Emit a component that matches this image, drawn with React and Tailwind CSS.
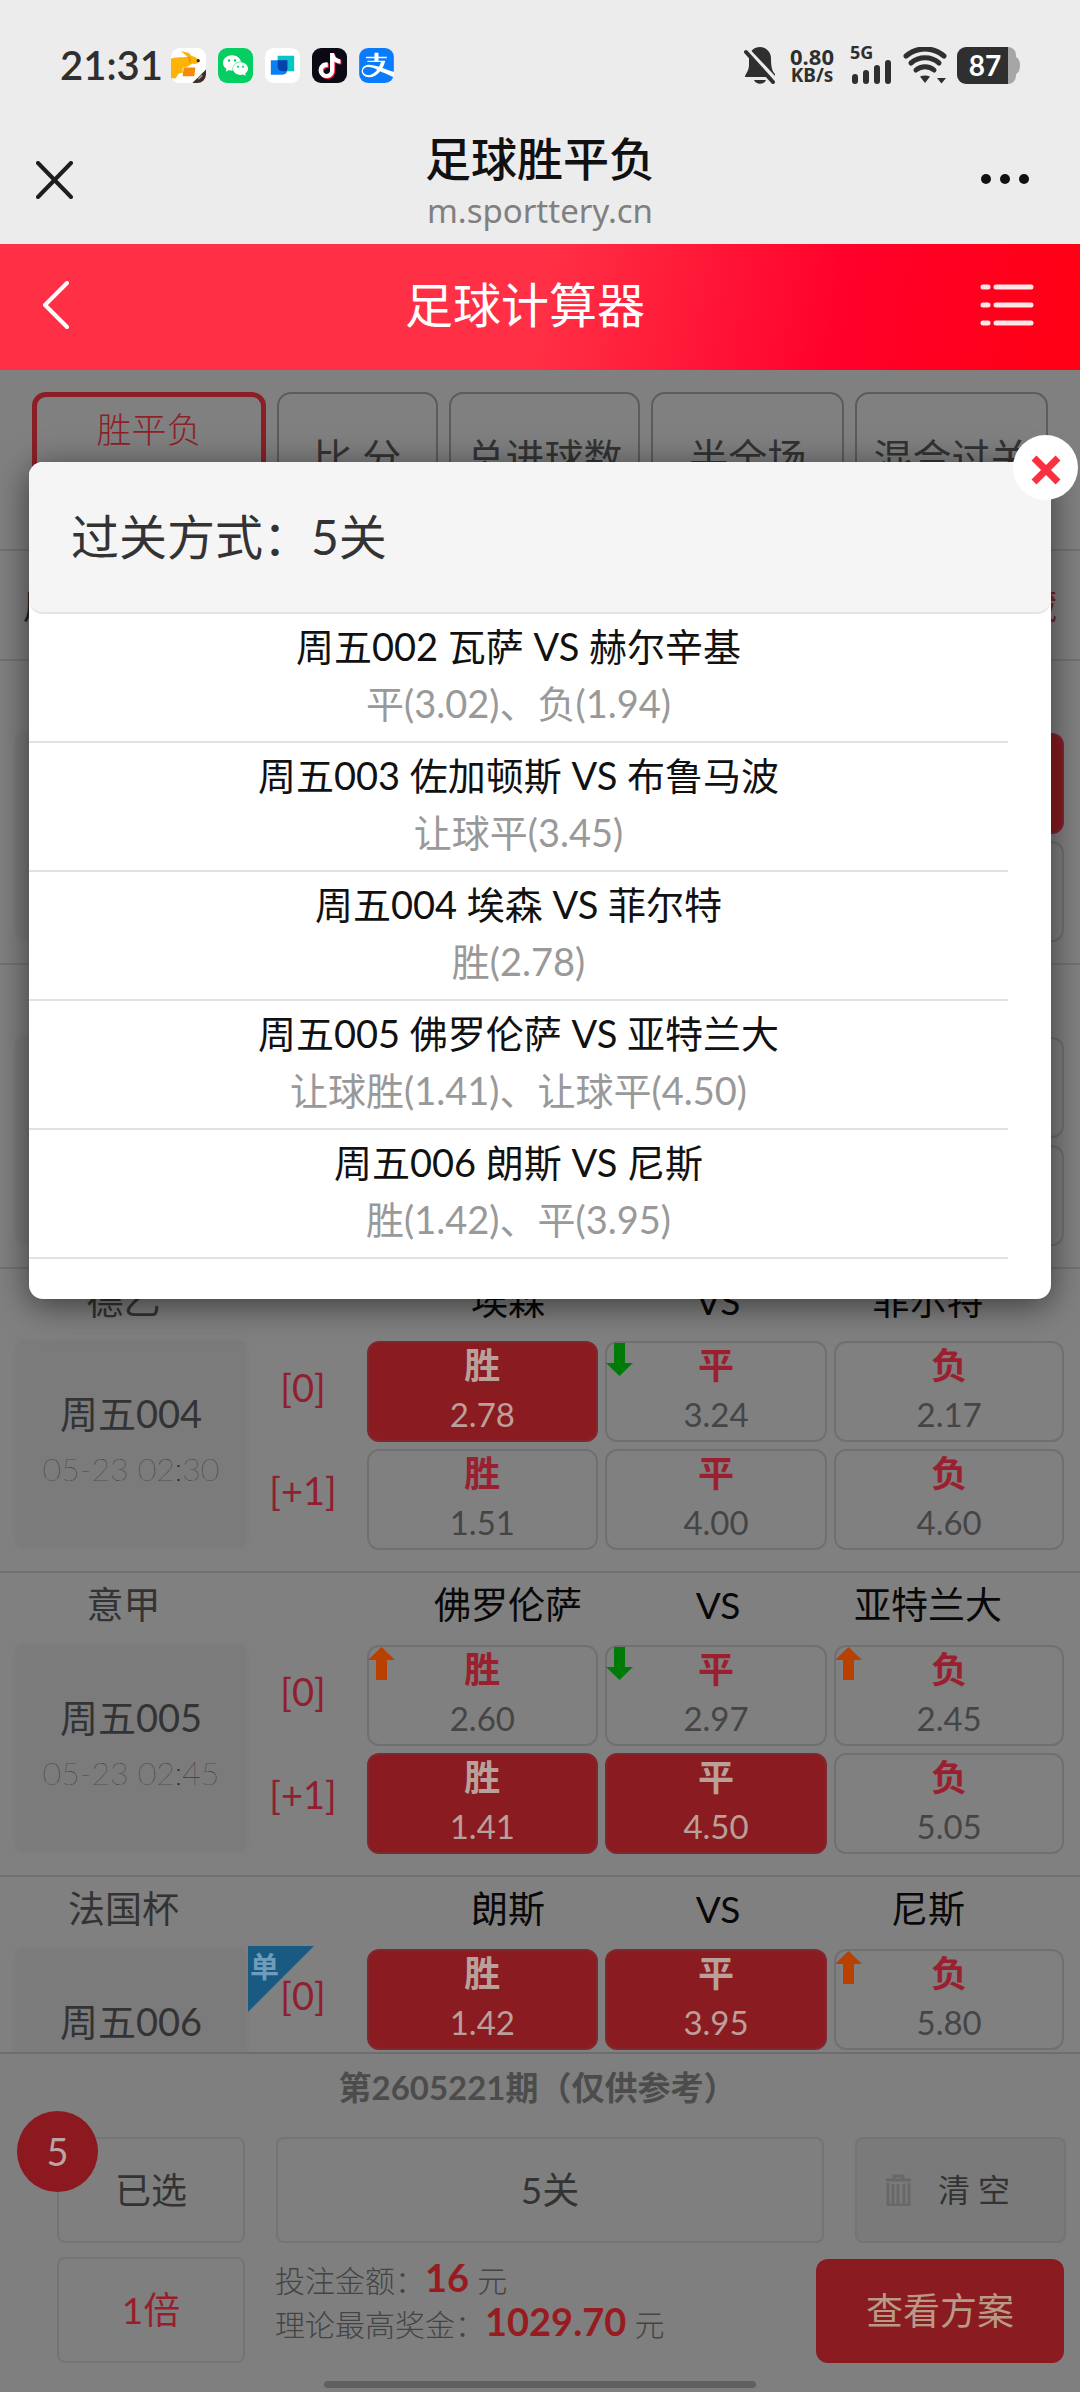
import { useState } from 'react';
import { SiWechat, SiTiktok, SiAlipay } from 'react-icons/si';

const picks = [
  { title: '周五002 瓦萨 VS 赫尔辛基', odds: '平(3.02)、负(1.94)' },
  { title: '周五003 佐加顿斯 VS 布鲁马波', odds: '让球平(3.45)' },
  { title: '周五004 埃森 VS 菲尔特', odds: '胜(2.78)' },
  { title: '周五005 佛罗伦萨 VS 亚特兰大', odds: '让球胜(1.41)、让球平(4.50)' },
  { title: '周五006 朗斯 VS 尼斯', odds: '胜(1.42)、平(3.95)' },
];

const matches = [
  {
    no: '周五002', home: '瓦萨', away: '赫尔辛基',
    rows: [
      { handicap: '[0]', cells: [{}, { odds: '3.02', on: true }, { odds: '1.94', on: true }] },
      { handicap: '', cells: [{}, {}, {}] },
    ],
  },
  {
    no: '周五003', home: '佐加顿斯', away: '布鲁马波',
    rows: [
      { handicap: '[0]', cells: [{}, {}, {}] },
      { handicap: '', cells: [{}, { odds: '3.45', on: true }, {}] },
    ],
  },
  {
    league: '德乙', no: '周五004', time: '05-23 02:30', home: '埃森', away: '菲尔特',
    rows: [
      { handicap: '[0]', cells: [{ odds: '2.78', on: true }, { odds: '3.24', trend: 'down' }, { odds: '2.17' }] },
      { handicap: '[+1]', cells: [{ odds: '1.51' }, { odds: '4.00' }, { odds: '4.60' }] },
    ],
  },
  {
    league: '意甲', no: '周五005', time: '05-23 02:45', home: '佛罗伦萨', away: '亚特兰大',
    rows: [
      { handicap: '[0]', cells: [{ odds: '2.60', trend: 'up' }, { odds: '2.97', trend: 'down' }, { odds: '2.45', trend: 'up' }] },
      { handicap: '[+1]', cells: [{ odds: '1.41', on: true }, { odds: '4.50', on: true }, { odds: '5.05' }] },
    ],
  },
  {
    league: '法国杯', no: '周五006', home: '朗斯', away: '尼斯', single: true,
    rows: [
      { handicap: '[0]', cells: [{ odds: '1.42', on: true }, { odds: '3.95', on: true }, { odds: '5.80', trend: 'up' }] },
    ],
  },
];

const results = ['胜', '平', '负'];

function KangarooIcon() {
  return (
    <svg viewBox="0 0 36 36" className="w-[35px] h-[35px]">
      <rect width="36" height="36" rx="9" fill="#fff" />
      <path d="M0 11C5 9 12 10 17 9L10 3L18 5L21 8C25 9 28 11 29 13C28 16 25 17 22 16C19 18 17 20 12 20L12 26C9 25 7 27 5 31L0 31Z" fill="#fdb308" />
      <path d="M13 20h12l-1 9H12z" fill="#f58a07" />
      <path d="M18 9c2 2 2 4 1 6" fill="none" stroke="#c87b00" strokeWidth="1" />
      <circle cx="28" cy="13" r="1.6" fill="#33230d" />
      <path d="M22 36L36 22V27A9 9 0 0 1 27 36Z" fill="#3b2c25" />
      <path d="M28 32l4-4" stroke="#a58c7b" strokeWidth="2" />
    </svg>
  );
}

function DocsIcon() {
  return (
    <svg viewBox="0 0 36 36" className="w-[35px] h-[35px]">
      <rect width="36" height="36" rx="9" fill="#fff" />
      <path d="M13 8h17v16H18a5 5 0 0 1-5-5z" fill="#06c5c8" />
      <path d="M6 12.500h17v10a5 5 0 0 1-5 5H6z" fill="#0b80f5" />
      <path d="M13 12.500h10v9a3 3 0 0 1-3 2.500h-2a5 5 0 0 1-5-5z" fill="#0344a6" />
    </svg>
  );
}

function BellOffIcon() {
  return (
    <svg viewBox="0 0 32 37" className="w-[32px] h-[37px]" fill="#2f2f2f">
      <path d="M16 0C22 0 27 5 27 11C27 20 28 24 31 27V30H1C1 27 5 24 5 18V10C6 4 10 0 16 0Z" />
      <path d="M10 33H22C20 38 12 38 10 33Z" />
      <path d="M3 2L32 33" stroke="#ececec" strokeWidth="4" />
      <path d="M2 5L29 35" stroke="#2f2f2f" strokeWidth="4" strokeLinecap="round" />
    </svg>
  );
}

function SignalIcon() {
  return (
    <svg viewBox="0 0 40 25" className="w-[40px] h-[25px]" stroke="#2f2f2f" strokeWidth="6" strokeLinecap="round">
      <path d="M3 18V22M14 14V22M25 9V22M36 4V22" />
    </svg>
  );
}

function WifiIcon() {
  return (
    <svg viewBox="0 0 44 37" className="w-[44px] h-[37px]" fill="none" stroke="#2f2f2f" strokeWidth="5" strokeLinecap="round">
      <path d="M3 9C14-.5 30-.5 41 9" />
      <path d="M8 16C16 9 28 9 36 16" />
      <path d="M13 23C18 18.500 26 18.500 31 23" />
      <path d="M17 29.500C20 28 24 28 27 29.500L22 36Z" fill="#2f2f2f" stroke="none" />
      <path d="M34 31H43L38.500 36.500Z" fill="#2f2f2f" stroke="none" />
    </svg>
  );
}

function BatteryIcon() {
  return (
    <div className="relative">
      <svg viewBox="0 0 63 37" className="w-[63px] h-[37px]">
        <path d="M51 0A8 8 0 0 1 59 8V10Q63 12 63 18.500T59 27V29A8 8 0 0 1 51 37Z" fill="#a6a6a6" />
        <path d="M9 0H51V37H9A9 9 0 0 1 0 28V9A9 9 0 0 1 9 0Z" fill="#2f2f2f" />
      </svg>
      <span className="absolute left-0 top-0 w-[56px] text-center text-[28px] leading-[36px] font-bold text-white">87</span>
    </div>
  );
}

function StatusBar() {
  return (
    <div className="flex items-center h-[130px] pl-[60px] pr-[60px] text-[#2f2f2f]">
      <span className="w-[111px] text-[40px] leading-none font-semibold">21:31</span>
      <div className="flex items-center gap-[12px]">
        <KangarooIcon />
        <span className="flex items-center justify-center w-[35px] h-[35px] rounded-[9px] bg-[#05cf63] text-white text-[25px]"><SiWechat /></span>
        <DocsIcon />
        <span className="flex items-center justify-center w-[35px] h-[35px] rounded-[9px] bg-[#0c0914] text-white text-[25px]">
          <SiTiktok className="drop-shadow-[1px_1px_0_#fe2c55]" />
        </span>
        <span className="flex items-center justify-center w-[35px] h-[35px] rounded-[9px] overflow-hidden bg-white text-[#0a7bfa] text-[35px]"><SiAlipay /></span>
      </div>
      <div className="flex items-center ml-auto">
        <BellOffIcon />
        <div className="flex flex-col items-center ml-[11px] w-[50px] font-['Noto_Sans',sans-serif] font-bold">
          <span className="text-[22px] leading-[20px]">0.80</span>
          <span className="text-[19px] leading-[19px]">KB/s</span>
        </div>
        <div className="flex flex-col ml-[13px] w-[42px] h-[38px] justify-between">
          <span className="text-[18px] leading-[12px] font-bold font-['Noto_Sans',sans-serif]">5G</span>
          <div className="-mt-2 ml-[2px]"><SignalIcon /></div>
        </div>
        <div className="ml-[11px] mr-[10px]"><WifiIcon /></div>
        <BatteryIcon />
      </div>
    </div>
  );
}

function TitleBar() {
  return (
    <div className="flex items-start justify-between h-[114px] px-[36px]">
      <button aria-label="关闭" className="mt-[31px] w-[120px]">
        <svg viewBox="0 0 37 38" className="w-[37px] h-[38px]" stroke="#1d1d1d" strokeWidth="4" strokeLinecap="round">
          <path d="M2 2L35 36M35 2L2 36" />
        </svg>
      </button>
      <div className="flex flex-col items-center">
        <h1 className="text-[46px] leading-[58px] font-medium text-[#111]">足球胜平负</h1>
        <p className="font-['Noto_Sans',sans-serif] text-[33px] leading-[46px] text-[#808080]">m.sporttery.cn</p>
      </div>
      <button aria-label="更多" className="flex justify-end gap-[9px] w-[120px] pr-[15px] mt-[44px]">
        <span className="w-[10px] h-[10px] rounded-full bg-[#111]" />
        <span className="w-[10px] h-[10px] rounded-full bg-[#111]" />
        <span className="w-[10px] h-[10px] rounded-full bg-[#111]" />
      </button>
    </div>
  );
}

function AppHeader() {
  return (
    <header className="flex items-center h-[126px] pb-[4px] pl-[42px] pr-[46px] bg-[linear-gradient(100deg,#ff3045_50%,#ff002a_78%,#ff0014_100%)]">
      <button aria-label="返回" className="w-[28px]">
        <svg viewBox="0 0 28 48" className="w-[28px] h-[48px]" fill="none" stroke="#fff" strokeWidth="4" strokeLinecap="round" strokeLinejoin="round">
          <path d="M25 2L3 24L25 46" />
        </svg>
      </button>
      <h2 className="flex-1 text-center text-[48px] leading-none text-white">足球计算器</h2>
      <button aria-label="菜单">
        <svg viewBox="0 0 54 44" className="w-[54px] h-[44px]" stroke="#ffe6e6" strokeWidth="5" strokeLinecap="round">
          <path d="M3 4H8M16 4H51M3 22H8M16 22H51M3 40H8M16 40H51" />
        </svg>
      </button>
    </header>
  );
}

function Trend({ dir }) {
  return (
    <svg viewBox="0 0 27 33" className="absolute -left-px top-0 w-[27px] h-[33px]">
      {dir === 'up' ? (
        <path d="M13.500 0L27 13H19V33H8V13H0Z" fill="#b84000" />
      ) : (
        <path d="M13.500 33L27 20H19V0H8V20H0Z" fill="#007a08" />
      )}
    </svg>
  );
}

function OddsCell({ label, odds, on, trend }) {
  return (
    <button
      aria-pressed={!!on}
      className={`relative flex flex-col items-center h-[101px] rounded-[12px] border-2 ${
        on ? 'bg-[#8a1b20] border-[#80282e] text-[#b9a09a]' : 'border-[#707072] text-[#454545]'
      }`}
    >
      {trend && <Trend dir={trend} />}
      <span className={`text-[36px] leading-[44px] font-bold ${on ? '' : 'text-[#9b202f]'}`}>{label}</span>
      <span className="text-[33px] leading-[54px]">{odds}</span>
    </button>
  );
}

function MatchRow({ match }) {
  return (
    <section className="border-b-2 border-[#727274]">
      <div className="flex h-[72px] text-[37px] leading-[64px]">
        <span className="w-[247px] text-center text-[#333]">{match.league}</span>
        <div className="grid grid-cols-3 flex-1 pl-[156px] pr-[47px] text-center text-[#080808] whitespace-nowrap">
          <span>{match.home}</span>
          <span>VS</span>
          <span>{match.away}</span>
        </div>
      </div>
      <div className="flex h-[230px] pl-[15px] pr-[16px]">
        <div className="flex flex-col items-center w-[232px] h-[206px] pt-[46px] rounded-lg bg-[#7b7b7b] shadow-[0_0_6px_#7b7b7b]">
          <span className="text-[38px] leading-[52px] text-[#333]">{match.no}</span>
          <span className="mt-[4px] text-[32px] leading-[52px] font-thin text-[#222]">{match.time}</span>
        </div>
        <div className="relative flex flex-col w-[120px] text-center text-[38px] text-[#8f2030]">
          {match.single && (
            <span className="absolute left-px top-[-3px] w-[66px] h-[66px] pl-[2px] text-left text-[29px] leading-[42px] font-bold text-[#6f9cb8] bg-[#185a82] [clip-path:polygon(0_0,100%_0,0_100%)]">
              单
            </span>
          )}
          {match.rows.map((row, i) => (
            <span key={i} className="relative pr-[8px] h-[103px] leading-[92px]">{row.handicap}</span>
          ))}
        </div>
        <div className="grid grid-cols-[231fr_223fr_230fr] content-start gap-[7px] flex-1">
          {match.rows.map((row) =>
            row.cells.map((cell, i) => <OddsCell key={i} label={results[i]} {...cell} />)
          )}
        </div>
      </div>
    </section>
  );
}

function Tabs() {
  const tab = 'h-[130px] rounded-[14px] border-2 border-[#5c5c5e] text-[39px] text-[#333] whitespace-nowrap';
  return (
    <nav className="flex items-start gap-[11px] h-[181px] pt-[22px] px-[32px] border-b-2 border-[#727274]">
      <button className="flex flex-col items-center flex-[224] h-[130px] pt-[8px] rounded-[14px] border-5 border-[#8a2026] text-[35px] leading-[48px] font-light text-[#8f1f28]">
        胜平负
      </button>
      <button className={`flex-[157] ${tab}`}>比 分</button>
      <button className={`flex-[188] ${tab}`}>总进球数</button>
      <button className={`flex-[189] ${tab}`}>半全场</button>
      <button className={`flex-[189] ${tab}`}>混合过关</button>
    </nav>
  );
}

function PicksDialog({ onClose }) {
  return (
    <div role="dialog" aria-labelledby="picks-title" className="absolute inset-x-[29px] top-[92px] rounded-[14px] bg-white pb-[40px] shadow-[0_6px_34px_rgba(0,0,0,0.55)]">
      <button onClick={onClose} aria-label="关闭" className="absolute -right-[27px] -top-[27px] flex items-center justify-center w-[65px] h-[65px] pt-[4px] rounded-full bg-white">
        <svg viewBox="0 0 30 30" className="w-[30px] h-[30px]" stroke="#f9303f" strokeWidth="7">
          <path d="M3 3L27 27M27 3L3 27" />
        </svg>
      </button>
      <h3 id="picks-title" className="h-[152px] pl-[42px] rounded-[14px] border-b-2 border-[#e4e4e4] bg-[#f5f5f5] text-[48px] leading-[150px] text-[#333]">
        过关方式：5关
      </h3>
      <ul className="mr-[43px] text-center text-[38px]">
        {picks.map((p) => (
          <li key={p.title} className="h-[129px] pt-[3px] border-b-2 border-[#e2e2e4]">
            <p className="leading-[58px] text-[#111]">{p.title}</p>
            <p className="leading-[56px] text-[#999]">{p.odds}</p>
          </li>
        ))}
      </ul>
    </div>
  );
}

function BetFooter() {
  const box = 'h-[106px] rounded-[8px] border-2 border-[#747476]';
  return (
    <footer className="h-[340px] pl-[57px] pr-[14px] border-t-2 border-[#6e6e70] bg-[#7f7f7f]">
      <p className="mr-[48px] h-[83px] text-center text-[33px] leading-[66px] font-bold text-[#4c4c4c]">第2605221期（仅供参考）</p>
      <div className="flex">
        <div className="relative mr-[31px]">
          <button className={`w-[188px] text-[36px] text-[#333] ${box}`}>已选</button>
          <span className="absolute -left-[40px] -top-[26px] w-[81px] h-[81px] rounded-full bg-[#8c191f] text-center text-[38px] leading-[80px] text-[#bba5a2]">5</span>
        </div>
        <button className={`flex-1 mr-[31px] text-[37px] text-[#333] ${box}`}>5关</button>
        <button className={`flex items-center justify-center gap-[26px] w-[211px] pr-[26px] bg-[#7a7a7a] text-[32px] text-[#333] ${box}`}>
          <svg viewBox="0 0 27 32" className="w-[27px] h-[32px]" fill="none" stroke="#68686a" strokeWidth="3">
            <path d="M1 6H26M9 6V2H18V6M3 9V31H24V9M8 10V30M13 10V30M19 10V30" />
          </svg>
          清 空
        </button>
      </div>
      <div className="flex mt-[14px]">
        <button className={`w-[188px] mr-[30px] text-[37px] text-[#971f2d] ${box}`}>1倍</button>
        <div className="flex-1 text-[30px] leading-[41px] font-light text-[#444] whitespace-nowrap">
          <p>投注金额：<b className="text-[38px] font-bold text-[#971c22]">16</b> 元</p>
          <p>理论最高奖金：<b className="text-[38px] font-bold text-[#971c22]">1029.70</b> 元</p>
        </div>
        <button className="mt-[2px] mr-[2px] w-[248px] h-[104px] rounded-[12px] bg-[#8a1b20] text-[37px] text-[#b89a86]">查看方案</button>
      </div>
      <div className="flex justify-center mt-[18px]">
        <span className="w-[432px] h-[7px] mr-[43px] rounded-full bg-[#606060]" />
      </div>
    </footer>
  );
}

export default function App() {
  const [open, setOpen] = useState(true);

  return (
    <div className="flex flex-col h-screen overflow-hidden bg-[#ececec] font-['Lato','Noto_Sans_CJK_SC',sans-serif]">
      <StatusBar />
      <TitleBar />
      <AppHeader />
      <main className="relative flex flex-col flex-1 min-h-0 bg-[#808080]">
        <Tabs />
        <div className="flex-1 min-h-0 overflow-hidden">
          <div className="flex items-center justify-between h-[110px] px-[23px] border-b-2 border-[#727274] text-[34px] text-[#222]">
            <span>周五</span>
            <span className="text-[#7d2228]">隐藏</span>
          </div>
          {matches.map((m) => <MatchRow key={m.no} match={m} />)}
        </div>
        <BetFooter />
        {open && <PicksDialog onClose={() => setOpen(false)} />}
      </main>
    </div>
  );
}
